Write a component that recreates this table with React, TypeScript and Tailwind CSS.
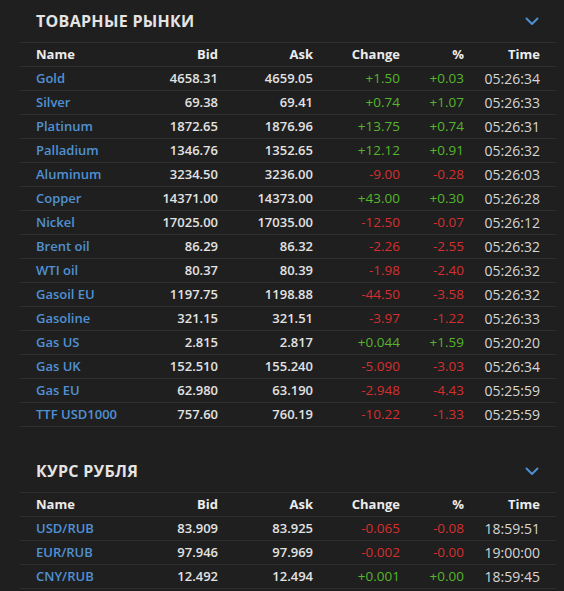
import React from "react";

type Row = [string, string, string, string, string, string];

const commodities: Row[] = [
  ["Gold", "4658.31", "4659.05", "+1.50", "+0.03", "05:26:34"],
  ["Silver", "69.38", "69.41", "+0.74", "+1.07", "05:26:33"],
  ["Platinum", "1872.65", "1876.96", "+13.75", "+0.74", "05:26:31"],
  ["Palladium", "1346.76", "1352.65", "+12.12", "+0.91", "05:26:32"],
  ["Aluminum", "3234.50", "3236.00", "-9.00", "-0.28", "05:26:03"],
  ["Copper", "14371.00", "14373.00", "+43.00", "+0.30", "05:26:28"],
  ["Nickel", "17025.00", "17035.00", "-12.50", "-0.07", "05:26:12"],
  ["Brent oil", "86.29", "86.32", "-2.26", "-2.55", "05:26:32"],
  ["WTI oil", "80.37", "80.39", "-1.98", "-2.40", "05:26:32"],
  ["Gasoil EU", "1197.75", "1198.88", "-44.50", "-3.58", "05:26:32"],
  ["Gasoline", "321.15", "321.51", "-3.97", "-1.22", "05:26:33"],
  ["Gas US", "2.815", "2.817", "+0.044", "+1.59", "05:20:20"],
  ["Gas UK", "152.510", "155.240", "-5.090", "-3.03", "05:26:34"],
  ["Gas EU", "62.980", "63.190", "-2.948", "-4.43", "05:25:59"],
  ["TTF USD1000", "757.60", "760.19", "-10.22", "-1.33", "05:25:59"],
];

const rub: Row[] = [
  ["USD/RUB", "83.909", "83.925", "-0.065", "-0.08", "18:59:51"],
  ["EUR/RUB", "97.946", "97.969", "-0.002", "-0.00", "19:00:00"],
  ["CNY/RUB", "12.492", "12.494", "+0.001", "+0.00", "18:59:45"],
];

const cols = "grid grid-cols-[104px_78px_95px_87px_64px_76px] px-[16px] h-[24px] items-center border-b border-[#2f2f2f]";

function Chevron() {
  return (
    <svg width="14" height="9" viewBox="0 0 14 9" className="block">
      <path d="M1.5 1.5 L7 7 L12.5 1.5" fill="none" stroke="#4d8fd1" strokeWidth="2" strokeLinecap="round" strokeLinejoin="round" />
    </svg>
  );
}

function Section({ title, rows }: { title: string; rows: Row[] }) {
  return (
    <div>
      <div className="h-[42px] flex items-center justify-between pl-[36px] pr-[25px]">
        <div className="text-[16px] font-bold text-[#e4e4e4] tracking-[0.3px]">{title}</div>
        <Chevron />
      </div>
      <div className="ml-[20px] w-[536px] border-t border-[#2f2f2f]">
        <div className={cols + " font-bold text-[#ececec]"}>
          <div>Name</div>
          <div className="text-right">Bid</div>
          <div className="text-right">Ask</div>
          <div className="text-right">Change</div>
          <div className="text-right">%</div>
          <div className="text-right">Time</div>
        </div>
        {rows.map((r) => {
          const up = r[3].startsWith("+");
          const c = up ? "text-[#56b52c]" : "text-[#d42f2f]";
          return (
            <div key={r[0]} className={cols}>
              <div className="text-[#5091d3] font-semibold whitespace-nowrap">{r[0]}</div>
              <div className="text-right font-semibold text-[#e2e2e2]">{r[1]}</div>
              <div className="text-right font-semibold text-[#e2e2e2]">{r[2]}</div>
              <div className={"text-right text-[13.5px] " + c}>{r[3]}</div>
              <div className={"text-right text-[13.5px] " + c}>{r[4]}</div>
              <div className="text-right text-[14px] text-[#d6d6d6]">{r[5]}</div>
            </div>
          );
        })}
      </div>
    </div>
  );
}

export default function App() {
  return (
    <div className="w-[564px] h-[591px] bg-[#1f1f1f] overflow-hidden text-[13px]" style={{ fontFamily: '"Open Sans", "Noto Sans", sans-serif' }}>
      <Section title="ТОВАРНЫЕ РЫНКИ" rows={commodities} />
      <div className="h-[23px]" />
      <Section title="КУРС РУБЛЯ" rows={rub} />
    </div>
  );
}
